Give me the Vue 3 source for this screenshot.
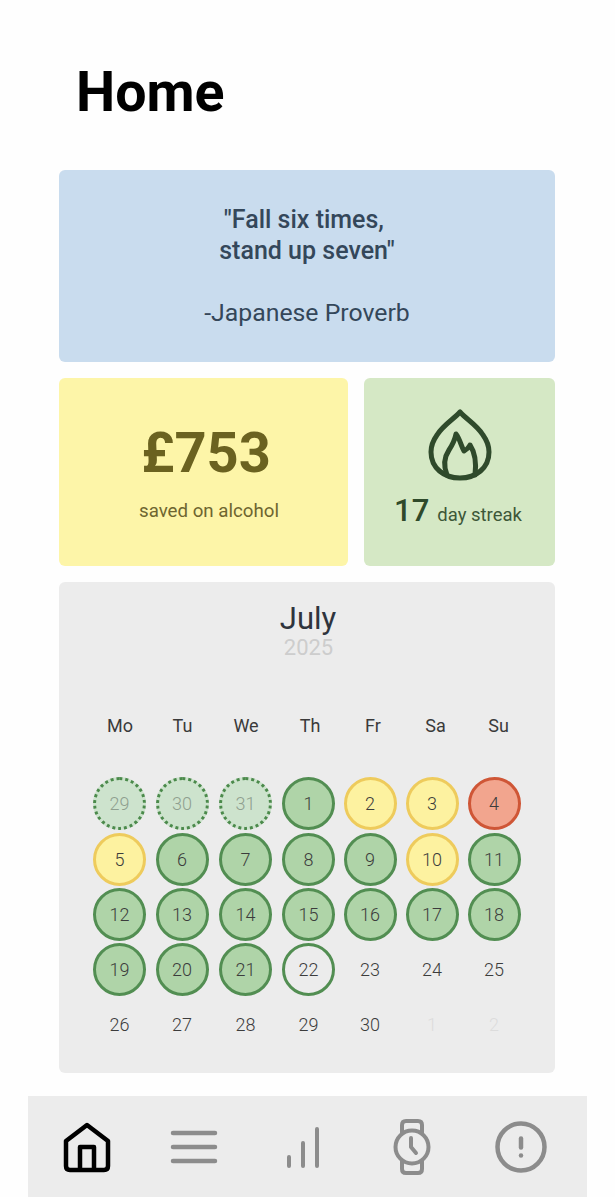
<template>
  <div class="page">
    <h1 class="title">Home</h1>

    <div class="cards">
      <section class="card quote">
        <p class="quote-text">"Fall six times, <br />stand up seven"</p>
        <p class="quote-by">-Japanese Proverb</p>
      </section>

      <div class="stats">
        <section class="card saved">
          <div class="amount">£753</div>
          <div class="saved-label">saved on alcohol</div>
        </section>
        <section class="card streak">
          <svg class="flame" viewBox="0 0 64 72" fill="none" stroke="currentColor" stroke-width="5" stroke-linejoin="round" stroke-linecap="round">
            <path d="M32 3 C26 10 15 16 9 26 C4 33 3 39 3 43 C3 59 16 69 32 69 C48 69 61 59 61 43 C61 39 60 33 55 26 C49 16 38 10 32 3 Z" />
            <path d="M19 66 C15 56 17 47 21 41 C25 35 27 30 28 25 C32 30 33 37 36 42 C38 41 41 38 42 36 C46 42 49 50 47 66" />
          </svg>
          <div class="streak-line"><span class="streak-num">17</span><span class="streak-label">day streak</span></div>
        </section>
      </div>

      <section class="card calendar">
        <div class="month">July</div>
        <div class="year">2025</div>
        <div class="weekdays">
          <span v-for="d in weekdays" :key="d">{{ d }}</span>
        </div>
        <div class="days">
          <span v-for="(d, i) in days" :key="i" class="day" :class="d.state">{{ d.n }}</span>
        </div>
      </section>
    </div>

    <nav class="nav">
      <div class="nav-item active">
        <svg width="48" height="52" viewBox="0 0 48 52" fill="none" stroke="currentColor" stroke-width="4.5" stroke-linejoin="round">
          <path d="M24 4 L3 20 V45 Q3 49 7 49 H41 Q45 49 45 45 V20 Z" />
          <path d="M17 49 V26 H31 V49" />
        </svg>
      </div>
      <div class="nav-item">
        <svg width="48" height="34" viewBox="0 0 48 34" fill="none" stroke="currentColor" stroke-width="4.5" stroke-linecap="round">
          <path d="M3 3 H45 M3 17 H45 M3 31 H45" />
        </svg>
      </div>
      <div class="nav-item">
        <svg width="36" height="44" viewBox="0 0 36 44" fill="none" stroke="currentColor" stroke-width="4" stroke-linecap="round">
          <path d="M4 41 V32 M18 41 V18 M32 41 V4" />
        </svg>
      </div>
      <div class="nav-item">
        <svg width="40" height="56" viewBox="0 0 40 56" fill="none" stroke="currentColor" stroke-width="4" stroke-linejoin="round" stroke-linecap="round">
          <circle cx="20" cy="28" r="16.500" />
          <path d="M10 14 V6 Q10 2 14 2 H26 Q30 2 30 6 V14" />
          <path d="M10 42 V50 Q10 54 14 54 H26 Q30 54 30 50 V42" />
          <path d="M19 19 V28 L24 34" />
        </svg>
      </div>
      <div class="nav-item">
        <svg width="54" height="54" viewBox="0 0 54 54" fill="none" stroke="currentColor" stroke-width="4.5" stroke-linecap="round">
          <circle cx="27" cy="27" r="23.500" />
          <path d="M27 18.500 V27.500" />
          <path d="M27 35.500 V35.600" />
        </svg>
      </div>
    </nav>
  </div>
</template>

<script setup>
const weekdays = ['Mo', 'Tu', 'We', 'Th', 'Fr', 'Sa', 'Su'];

const yellow = [2, 3, 5, 10];

const days = [
  { n: 29, state: 'past' },
  { n: 30, state: 'past' },
  { n: 31, state: 'past' },
];

for (let n = 1; n <= 30; n++) {
  let state = 'good';
  if (yellow.includes(n)) state = 'okay';
  if (n === 4) state = 'bad';
  if (n === 22) state = 'today';
  if (n > 22) state = '';
  days.push({ n, state });
}

days.push({ n: 1, state: 'next' }, { n: 2, state: 'next' });
</script>

<style scoped>
.page {
  display: flex;
  flex-direction: column;
  width: 615px;
  height: 1197px;
  overflow: hidden;
  background: #fefefe;
  font-family: Roboto, "Liberation Sans", sans-serif;
}

.title {
  margin: 0;
  padding: 60px 0 0 76px;
  height: 110px;
  box-sizing: border-box;
  font-size: 55.500px;
  font-weight: 700;
  line-height: 66px;
  color: #000;
}

.cards {
  display: flex;
  flex-direction: column;
  gap: 16px;
  width: 496px;
  margin-left: 59px;
  margin-top: 60px;
}

.card {
  box-sizing: border-box;
  border-radius: 6px;
}

.quote {
  height: 192px;
  padding-top: 34px;
  background: #c9dcee;
  color: #34475a;
  text-align: center;
}

.quote p {
  margin: 0;
}

.quote-text {
  font-size: 25px;
  font-weight: 500;
  line-height: 31px;
  white-space: pre;
}

.quote-by {
  margin-top: 31px !important;
  font-size: 24.800px;
  line-height: 31px;
}

.stats {
  display: flex;
  gap: 16px;
  height: 188px;
}

.saved {
  width: 289px;
  padding-top: 42px;
  padding-left: 5px;
  background: #fdf5a8;
  color: #6b6220;
  text-align: center;
}

.amount {
  font-size: 56px;
  font-weight: 700;
  line-height: 66px;
}

.saved-label {
  margin-top: 14px;
  padding-left: 6px;
  font-size: 18.700px;
  line-height: 22px;
  color: #6e6530;
}

.streak {
  display: flex;
  flex-direction: column;
  align-items: center;
  flex: 1;
  padding-top: 31px;
  background: #d5e8c5;
  color: #2f4a2b;
}

.flame {
  width: 64px;
  height: 72px;
}

.streak-line {
  display: flex;
  align-items: baseline;
  gap: 8px;
  margin-top: 11px;
  margin-right: 3px;
}

.streak-num {
  font-size: 31px;
  font-weight: 500;
  line-height: 38px;
}

.streak-label {
  font-size: 18.500px;
  color: #3d5738;
}

.calendar {
  height: 491px;
  padding-top: 18px;
  background: #ececec;
  text-align: center;
}

.month {
  font-size: 31px;
  line-height: 37px;
  color: #2f343d;
  padding-left: 2px;
}

.year {
  font-size: 22px;
  line-height: 22px;
  color: #cdcdcd;
  padding-left: 3px;
}

.weekdays {
  display: grid;
  grid-template-columns: 62px 63px 64px 64px 62px 63px 63px;
  margin-top: 56px;
  margin-left: 30px;
  font-size: 18px;
  line-height: 22px;
  color: #3a3a3a;
}

.days {
  display: grid;
  grid-template-columns: 62px 63px 64px 62px 61px 63px 61px;
  grid-template-rows: 56px 56px 54px 56px 55px;
  align-items: center;
  justify-items: center;
  margin-top: 38px;
  margin-left: 29.500px;
  font-size: 18px;
  font-weight: 300;
}

.day {
  display: flex;
  align-items: center;
  justify-content: center;
  box-sizing: border-box;
  width: 53px;
  height: 53px;
  border-radius: 50%;
  color: #3c3c3c;
}

.good {
  background: #afd4a8;
  border: 3.500px solid #528e52;
}

.okay {
  background: #fdf2a0;
  border: 3.500px solid #eecb5c;
}

.bad {
  background: #f2a58e;
  border: 3.500px solid #cf5636;
}

.today {
  border: 3.500px solid #528e52;
}

.past {
  background: #cde3cd;
  border: 3px dotted #4b8a4b;
  color: #8f9f8f;
}

.next {
  color: #dcdcdc;
}

.nav {
  display: grid;
  grid-template-columns: 108px 106px 112px 106px 112px;
  align-items: center;
  justify-items: center;
  box-sizing: border-box;
  width: 559px;
  height: 101px;
  margin-top: 23px;
  margin-left: 28px;
  padding-left: 5px;
  background: #ececec;
  color: #8c8c8c;
}

.nav-item {
  display: flex;
  align-items: center;
  justify-content: center;
}

.nav-item.active {
  color: #000;
}
</style>

<style>
body {
  background: #fff;
}
</style>
